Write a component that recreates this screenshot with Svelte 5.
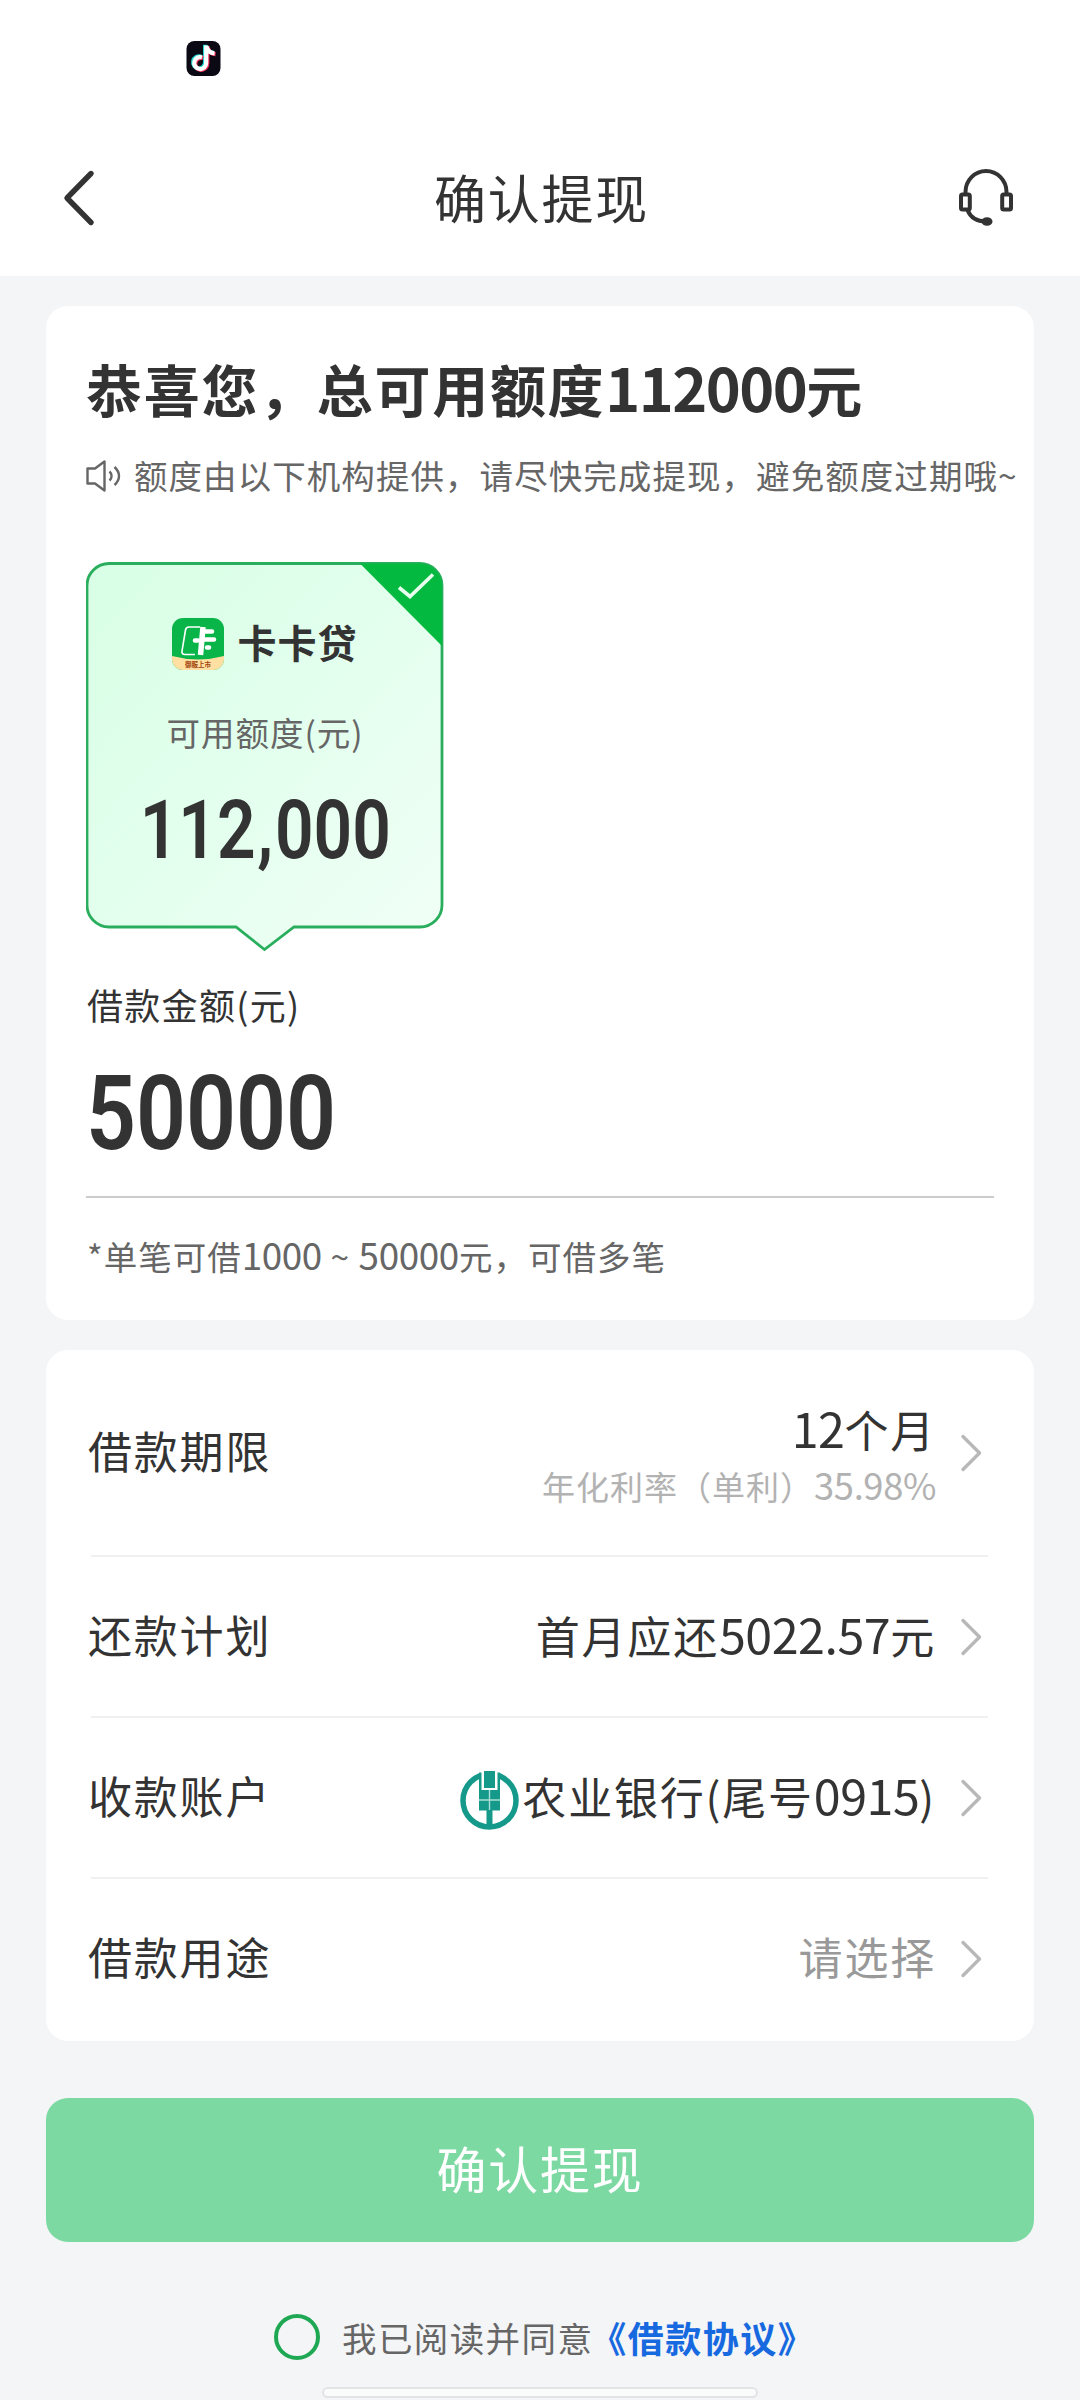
<script>
  const notice = '额度由以下机构提供，请尽快完成提现，避免额度过期哦~';

  const rows = [
    { label: '借款期限', value: '12个月', sub: '年化利率（单利）35.98%' },
    { label: '还款计划', value: '首月应还5022.57元' },
    { label: '收款账户', value: '农业银行(尾号0915)', bank: true },
    { label: '借款用途', value: '请选择', empty: true },
  ];

  let agreed = $state(false);

  // digits are set a little larger than the Chinese text around them
  function parts(text) {
    return text.split(/([\d.%]+)/).filter((p) => p !== '');
  }
</script>

{#snippet mixed(text)}
  {#each parts(text) as part}{#if /\d/.test(part)}<span class="num">{part}</span>{:else}{part}{/if}{/each}
{/snippet}

<div class="page">
  <div class="status-bar">
    <svg class="app-badge" viewBox="0 0 34 35">
      <rect width="34" height="35" rx="8" fill="#0b0914" />
      <g fill="none" stroke-width="4.2">
        <path d="M15.5 16.3a6 6 0 1 0 4.2 5.7V4.5M20 5.5c1 4.5 3.5 6.5 8 6.8" stroke="#25d8d6" transform="translate(-1.1 -.7)" />
        <path d="M15.5 16.3a6 6 0 1 0 4.2 5.7V4.5M20 5.5c1 4.5 3.5 6.5 8 6.8" stroke="#f0345f" transform="translate(1.1 .8)" />
        <path d="M15.5 16.3a6 6 0 1 0 4.2 5.7V4.5M20 5.5c1 4.5 3.5 6.5 8 6.8" stroke="#fff" />
      </g>
    </svg>
  </div>

  <header class="nav">
    <button class="icon-button" aria-label="返回">
      <svg width="34" height="58" viewBox="0 0 34 58" fill="none" stroke="#333" stroke-width="5.4" stroke-linecap="round" stroke-linejoin="round">
        <path d="M29 4.5 5 29l24 24.5" />
      </svg>
    </button>
    <h1>确认提现</h1>
    <button class="icon-button" aria-label="客服">
      <svg width="54" height="58" viewBox="0 0 54 58" fill="none" stroke="#333" stroke-width="4">
        <path d="M6.5 25V23a20.5 21 0 0 1 41 0v2" />
        <rect x="2" y="25.5" width="8.8" height="15" rx="1.5" />
        <rect x="43.2" y="25.5" width="8.8" height="15" rx="1.5" />
        <path d="M8.5 41c3 7.5 9.5 11.5 18.5 11.5" />
        <ellipse cx="28" cy="52.5" rx="5.5" ry="4.3" fill="#333" stroke="none" />
      </svg>
    </button>
  </header>

  <main>
    <section class="card quota">
      <h2>{@render mixed('恭喜您，总可用额度112000元')}</h2>
      <p class="notice">
        <svg width="35" height="32" viewBox="0 0 35 32" fill="none" stroke="#666" stroke-width="2.4" stroke-linejoin="round">
          <path d="M1.5 8.5h7.5L18.5 1.5v29L9 23.5H1.5z" />
          <path d="M23.5 11.5c2.8 2.6 2.8 6.4 0 9M28.5 7c6 5.5 6 12.5 0 18" />
        </svg>
        <span>{notice}</span>
      </p>

      <div class="coupon">
        <svg class="coupon-bg" width="358" height="390" viewBox="0 0 358 390">
          <defs>
            <linearGradient id="mint" x1="0" y1="0" x2="1" y2="1">
              <stop offset="0" stop-color="#d8ffe5" />
              <stop offset=".5" stop-color="#e3ffee" />
              <stop offset="1" stop-color="#f1fff6" />
            </linearGradient>
          </defs>
          <path d="M23 1.5H334a22 22 0 0 1 22 22V343a22 22 0 0 1-22 22H208l-29.5 22.5L150 365H23a22 22 0 0 1-22-22V23.5a22 22 0 0 1 22-22z" fill="url(#mint)" stroke="#2aae5e" stroke-width="2.8" />
          <path d="M274 1.5H334a22 22 0 0 1 22 22V84z" fill="#04b93f" />
          <path d="M313 25.5 324 34.5 347 12.5" fill="none" stroke="#e6ffee" stroke-width="3.6" />
        </svg>
        <div class="brand">
          <svg width="52" height="52" viewBox="0 0 52 52">
            <defs>
              <clipPath id="brand-shape"><rect width="52" height="52" rx="11" /></clipPath>
            </defs>
            <g clip-path="url(#brand-shape)">
              <rect width="52" height="52" fill="#09b548" />
              <path d="M0 38q26 7 52 0v14H0z" fill="#ffe0a2" />
              <g fill="none" stroke="#fff">
                <path d="M28 9H17q-3 0-3.5 3L10 33q-.5 3.5 3 3.5h10" stroke-width="1.6" />
                <path d="M31 9 28.5 37" stroke-width="5.5" />
                <path d="M33 13.5h7M23 22.5h3M32 21.5h10M35 29.5h2" stroke-width="4.6" stroke-linecap="round" />
              </g>
              <text x="26" y="49" text-anchor="middle" class="brand-tag">御服上市</text>
            </g>
          </svg>
          <strong>卡卡贷</strong>
        </div>
        <p class="coupon-label">可用额度(元)</p>
        <p class="coupon-amount">112<i>,</i>000</p>
      </div>

      <p class="amount-label">借款金额(元)</p>
      <p class="amount"><span>50000</span></p>
      <p class="hint">{@render mixed('*单笔可借1000 ~ 50000元，可借多笔')}</p>
    </section>

    <section class="card rows">
      {#each rows as row}
        <div class="row" class:tall={row.sub}>
          <span class="row-label">{row.label}</span>
          <div class="row-body">
            <div class="row-value" class:empty={row.empty}>
              {#if row.bank}
                <svg class="bank" width="59" height="59" viewBox="0 0 59 59">
                  <circle cx="29.5" cy="29.5" r="26.5" fill="#fff" stroke="#15998a" stroke-width="5.5" />
                  <path d="M19 0h21v22H19z" fill="#fff" />
                  <path d="M19 1.5h2.5V20H19zM37.5 1.5H40V20h-2.5zM24 0h11v17H24z" fill="#15998a" />
                  <path d="M19 19h21v20.5h-7.5V57h-6V39.5H19z" fill="#15998a" />
                  <path d="M29.5 19v20M19 29h21" stroke="#a9ded6" stroke-width="1.4" />
                </svg>
              {/if}
              <span class="row-text">{@render mixed(row.value)}</span>
            </div>
            {#if row.sub}
              <div class="row-sub">{@render mixed(row.sub)}</div>
            {/if}
          </div>
          <svg class="arrow" width="22" height="38" viewBox="0 0 22 38" fill="none" stroke="#b8b8b8" stroke-width="3.4" stroke-linecap="round" stroke-linejoin="round">
            <path d="M3 2.5 19.5 19 3 35.5" />
          </svg>
        </div>
      {/each}
    </section>

    <button class="submit">确认提现</button>

    <div class="agreement">
      <button class="radio" class:checked={agreed} aria-label="同意" onclick={() => (agreed = !agreed)}></button>
      <span>我已阅读并同意</span>
      <a href="#agreement">《借款协议》</a>
    </div>
  </main>

  <div class="home-bar"></div>
</div>

<style>
  :global(body) {
    background: #f4f5f7;
  }

  .page {
    display: flex;
    flex-direction: column;
    width: 1080px;
    height: 2400px;
    overflow: hidden;
    background: #f4f5f7;
    color: #333;
    font-family: "Noto Sans CJK SC", sans-serif;
  }

  .page * {
    box-sizing: border-box;
  }

  h1, h2, p {
    margin: 0;
    white-space: nowrap;
  }

  button {
    padding: 0;
    border: none;
    background: none;
    font-family: inherit;
    cursor: pointer;
  }

  .status-bar {
    height: 120px;
    padding: 41px 0 0 186px;
    background: #fff;
  }

  .app-badge {
    display: block;
    width: 35px;
    height: 35px;
  }

  .nav {
    display: flex;
    align-items: center;
    justify-content: space-between;
    height: 156px;
    padding: 0 67px 0 62px;
    background: #fff;
  }

  .nav h1 {
    margin-left: 28px;
    padding-bottom: 3px;
    font-size: 52px;
    font-weight: 400;
    line-height: 60px;
    letter-spacing: 1.8px;
  }

  .icon-button {
    display: flex;
  }

  main {
    display: flex;
    flex-direction: column;
    padding: 30px 46px 0;
  }

  .card {
    border-radius: 22px;
    background: #fff;
  }

  .num {
    font-size: 1.1em;
    line-height: 1;
    letter-spacing: -.01em;
  }

  .quota {
    height: 1014px;
    padding: 50px 0 0 40px;
  }

  h2 {
    font-size: 56px;
    font-weight: 700;
    line-height: 64px;
    letter-spacing: 1.7px;
  }

  h2 .num {
    font-size: 1.06em;
    letter-spacing: -.026em;
  }

  .notice {
    display: flex;
    align-items: center;
    gap: 13px;
    margin-top: 32px;
    color: #666;
    font-size: 33.5px;
    line-height: 48px;
    letter-spacing: 1.06px;
  }

  .notice span {
    padding-bottom: 3px;
    line-height: 45px;
  }

  .coupon {
    position: relative;
    display: flex;
    flex-direction: column;
    align-items: center;
    width: 358px;
    height: 390px;
    margin-top: 62px;
    padding-top: 56px;
  }

  .coupon-bg {
    position: absolute;
    top: 0;
    left: 0;
  }

  .brand, .coupon-label, .coupon-amount {
    position: relative;
  }

  .brand {
    display: flex;
    align-items: center;
    gap: 13px;
    height: 52px;
  }

  .brand strong {
    padding-bottom: 7px;
    font-size: 39px;
    font-weight: 700;
    line-height: 44px;
    letter-spacing: 1px;
  }

  .brand-tag {
    fill: #a0430c;
    font-size: 6.5px;
    font-weight: 700;
  }

  .coupon-label {
    margin-top: 38px;
    color: #666;
    font-size: 33.5px;
    line-height: 48px;
    letter-spacing: 1px;
  }

  .coupon-amount, .amount {
    font-family: Roboto, sans-serif;
    font-weight: 600;
  }

  .coupon-amount {
    margin-top: 34px;
    font-size: 81.5px;
    line-height: 80px;
    transform: scaleX(.83);
  }

  .coupon-amount i {
    margin: 0 2px;
    font-style: normal;
  }

  .amount-label {
    margin: 27px 0 0 1px;
    font-size: 36px;
    line-height: 50px;
    letter-spacing: 1.3px;
  }

  .amount {
    width: 908px;
    margin-top: 34px;
    padding-bottom: 31px;
    border-bottom: 2px solid #ccc;
    font-size: 104.5px;
    line-height: 102px;
  }

  .amount span {
    display: inline-block;
    transform: scaleX(.838);
    transform-origin: left;
  }

  .hint {
    margin: 34px 0 0 1px;
    color: #666;
    font-size: 33.5px;
    line-height: 48px;
    letter-spacing: 1px;
  }

  .rows {
    height: 691px;
    margin-top: 30px;
    padding: 0 46px 0 45px;
  }

  .row {
    display: flex;
    align-items: center;
    height: 161px;
    padding-right: 6px;
    border-top: 2px solid #f0f0f0;
    font-size: 44px;
    letter-spacing: 1.8px;
  }

  .row.tall {
    height: 205px;
    border-top: none;
  }

  .row.tall .row-body {
    padding-top: 11px;
  }

  .row-label {
    flex: 1;
    margin-left: -3px;
    padding-bottom: 5px;
    line-height: 50px;
  }

  .row-body {
    display: flex;
    flex-direction: column;
    align-items: flex-end;
  }

  .row-value {
    display: flex;
    align-items: center;
    gap: 3px;
  }

  .row-text {
    padding-bottom: 5px;
    line-height: 50px;
  }

  .row-value.empty {
    color: #999;
  }

  .bank {
    margin-top: 5px;
  }

  .row-sub {
    margin-top: -1px;
    color: #b2b2b2;
    font-size: 33px;
    line-height: 56px;
    letter-spacing: 1px;
  }

  .arrow {
    margin-left: 24px;
  }

  .submit {
    height: 144px;
    margin-top: 57px;
    padding-bottom: 6px;
    border-radius: 22px;
    background: #7cd9a2;
    color: #fff;
    font-size: 50px;
    letter-spacing: 1.7px;
  }

  .agreement {
    display: flex;
    align-items: center;
    height: 50px;
    margin: 70px 0 0 228px;
    color: #666;
    font-size: 34.5px;
    line-height: 50px;
    letter-spacing: 1.4px;
    white-space: nowrap;
  }

  .radio {
    width: 46px;
    height: 46px;
    margin-right: 22px;
    border: 4px solid #1fa854;
    border-radius: 50%;
  }

  .radio.checked {
    background: #1fa854;
  }

  .agreement a {
    margin-left: -3px;
    color: #1769e0;
    font-size: 36px;
    font-weight: 700;
    letter-spacing: 1.5px;
    text-decoration: none;
  }

  .home-bar {
    align-self: center;
    width: 436px;
    height: 11px;
    margin-top: 25px;
    border: 2px solid #e2e5e5;
    border-radius: 6px;
    background: #fafcfb;
  }
</style>
